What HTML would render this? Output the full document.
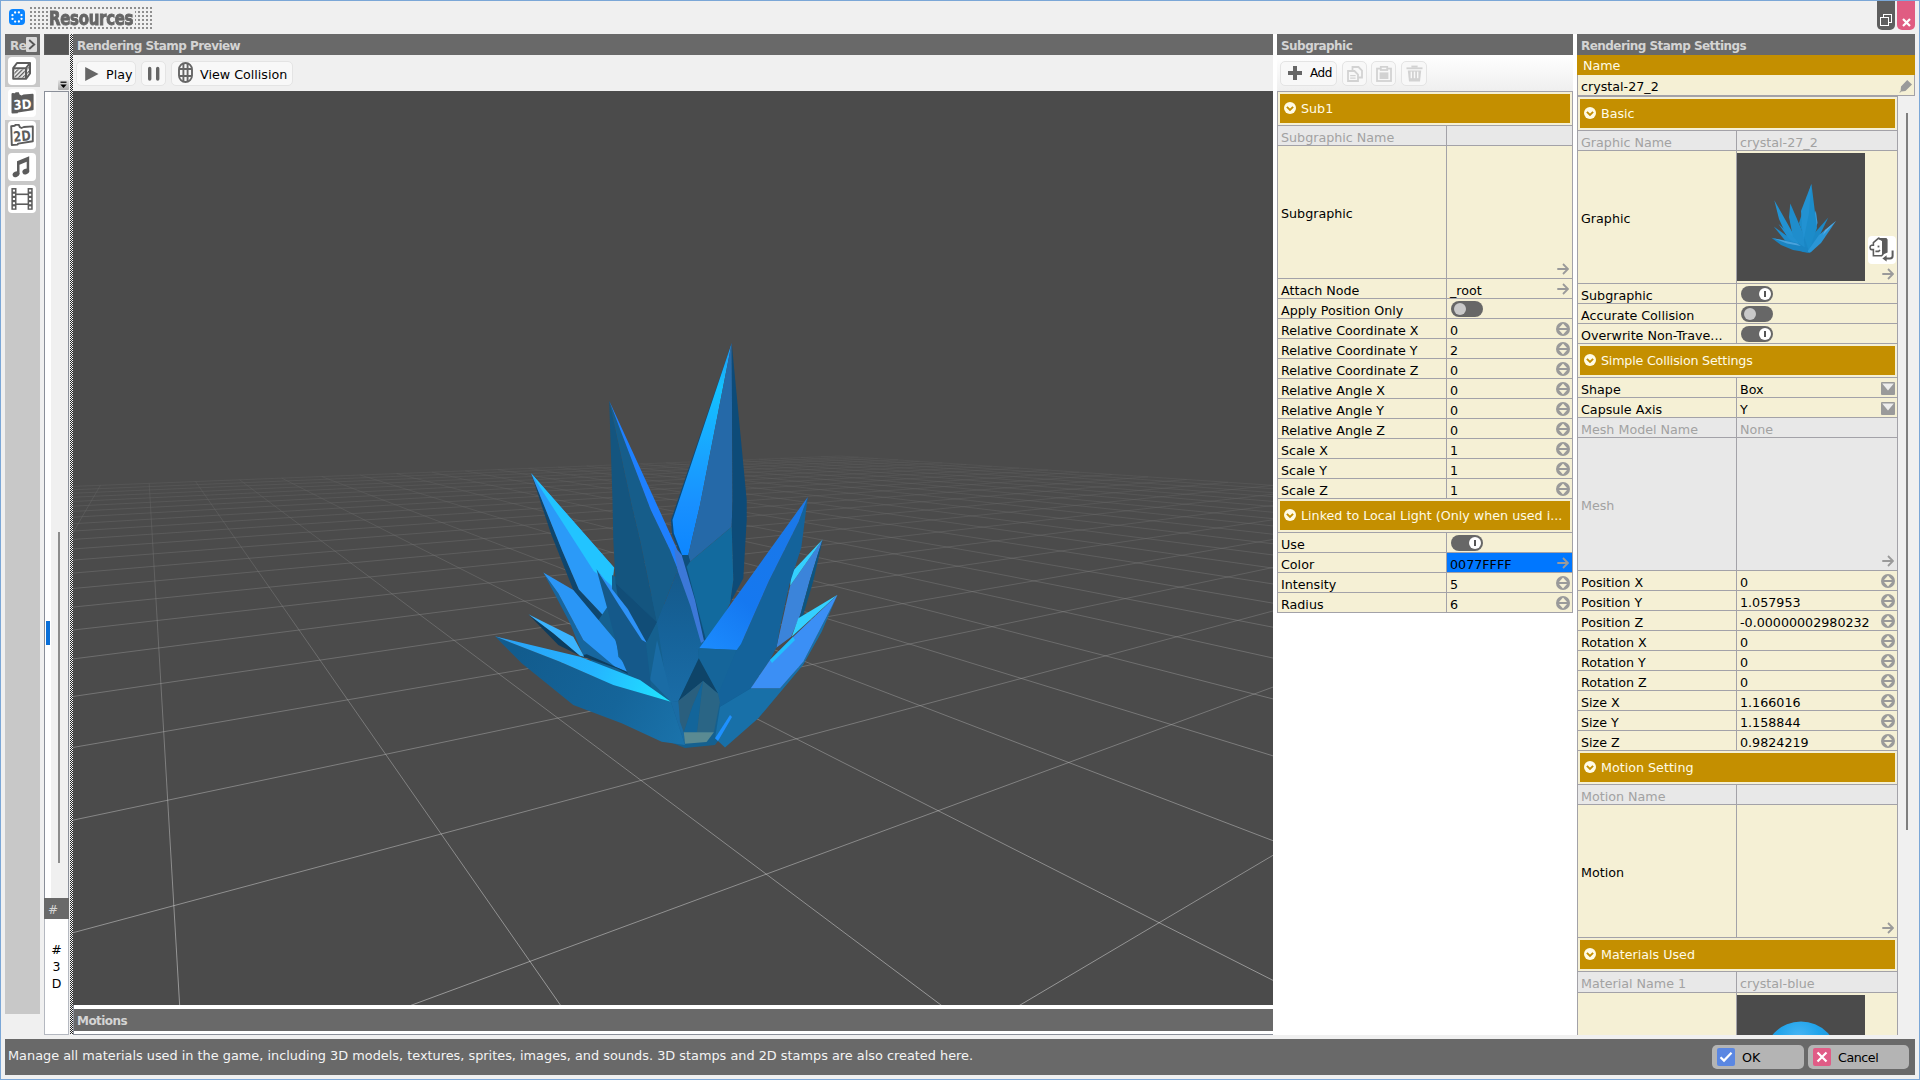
<!DOCTYPE html>
<html lang="en"><head><meta charset="utf-8"><title>Resources</title>
<style>
*{box-sizing:border-box}
html,body{margin:0;padding:0}
body{width:1920px;height:1080px;overflow:hidden;background:#f0f0f0;position:relative;font-family:"DejaVu Sans","Liberation Sans",sans-serif;font-size:12.7px;color:#000;line-height:19px}
.a{position:absolute}
.hdr{position:absolute;background:#696969;color:#d4d4d4;font-weight:bold;font-size:12px;line-height:21px;height:21px;padding-left:4px;white-space:nowrap;overflow:hidden}
.hdr span{position:relative;top:2px;letter-spacing:-0.55px}
.btn{position:absolute;background:#f8f8f8;border:1px solid #e4e4e4;border-radius:5px;height:25px}
.btn .t{position:absolute;top:3px;white-space:nowrap;line-height:19px}
.grid{position:absolute;background:#f5f0d5;border:1px solid #a3a2a8;overflow:hidden}
.r{position:absolute;left:0;right:0;border-top:1px solid #a3a2a8}
.r .l,.r .v{position:absolute;top:0;bottom:0;white-space:nowrap;overflow:hidden;padding-left:3px}
.r .l span,.r .v span{position:relative;top:2px}
.r .v{border-left:1px solid #a3a2a8}
.r.d{background:#e8e8e8;color:#a2a2a2}
.sec{position:absolute;left:2px;right:2px;height:29px;background:#c48f00;color:#fffbe6;white-space:nowrap;overflow:hidden}
.sec span{position:absolute;left:21px;top:5px;line-height:19px}
.sec svg{position:absolute;left:4px;top:8px}
.ic{position:absolute}
.tg{position:absolute;width:32px;height:16px;border-radius:8px;background:#676767}
.tg i{position:absolute;top:2px;width:12px;height:12px;border-radius:6px;display:block}
.tg.off i{left:3px;background:#c9c9c9}
.tg.on i{left:18px;background:#fff}
.tg.on i:after{content:"";position:absolute;left:5px;top:3px;width:2px;height:6px;background:#555}
.sb{position:absolute;left:8px;width:28px;height:28px;background:#fff;border-radius:4px}
</style></head>
<body>
<div class="a" style="left:0;top:0;width:1920px;height:1080px;border:1px solid #7ba7d7"></div>
<svg class="a" style="left:9px;top:9px" width="16" height="16" viewBox="0 0 16 16"><rect width="16" height="16" rx="4" fill="#0a84ff"/><circle cx="12.53" cy="9.86" r="1.15" fill="#fff"/><circle cx="9.89" cy="12.52" r="1.15" fill="#fff"/><circle cx="6.14" cy="12.53" r="1.15" fill="#fff"/><circle cx="3.48" cy="9.89" r="1.15" fill="#fff"/><circle cx="3.47" cy="6.14" r="1.15" fill="#fff"/><circle cx="6.11" cy="3.48" r="1.15" fill="#fff"/><circle cx="9.86" cy="3.47" r="1.15" fill="#fff"/><circle cx="12.52" cy="6.11" r="1.15" fill="#fff"/></svg>
<div class="a" style="left:30px;top:7px;width:122px;height:22px;background:linear-gradient(90deg,#f0f0f0 2px,transparent 2px),linear-gradient(#f0f0f0 2px,transparent 2px),#8e8e8e;background-size:4px 4px;background-position:-2px -2px"></div>
<div class="a" style="left:48px;top:10px;width:87px;height:17px;background:#f0f0f0"></div>
<div class="a" id="title" style="left:49px;top:5px;height:26px;line-height:26px;font-family:'DejaVu Sans Condensed','DejaVu Sans','Liberation Sans',sans-serif;font-weight:bold;font-size:19px;color:#666;transform-origin:0 50%;transform:scaleX(0.873);white-space:nowrap;letter-spacing:-0.3px;-webkit-text-stroke:0.9px #666;text-shadow:0 0 2px #f0f0f0">Resources</div>
<div class="a" style="left:1877px;top:1px;width:18px;height:29px;background:#5e5e5e;border-radius:0 0 5px 5px"><svg class="a" style="left:3px;top:13px" width="13" height="13" viewBox="0 0 13 13" fill="none" stroke="#fff" stroke-width="1"><rect x="3.5" y="0.5" width="8" height="8"/><rect x="0.5" y="3.5" width="8" height="8" fill="#5e5e5e"/></svg></div>
<div class="a" style="left:1897px;top:1px;width:18px;height:29px;background:#e05c82;border-radius:0 0 5px 5px"><svg class="a" style="left:5px;top:17px" width="9" height="9" viewBox="0 0 9 9" stroke="#fff" stroke-width="2.2"><path d="M1 1 L8 8 M8 1 L1 8"/></svg></div>
<div class="hdr" style="left:5px;top:34px;width:35px;padding-left:5px"><span>Re</span></div>
<div class="a" style="left:26px;top:37px;width:11px;height:15px;background:#d9d9d9;border-radius:1px"><svg class="a" style="left:2px;top:2px" width="8" height="11" viewBox="0 0 8 11" fill="none" stroke="#555" stroke-width="1.9"><path d="M1.2 1 L6.2 5.5 L1.2 10"/></svg></div>
<div class="a" style="left:5px;top:55px;width:35px;height:959px;background:#c8c8c8"></div>
<div class="a" style="left:5px;top:87px;width:35px;height:33px;background:#f0f0f0"></div>
<div class="sb" style="top:57px"><svg class="ic" style="left:4px;top:5px" width="20" height="18" viewBox="0 0 20 18"><defs><pattern id="hat" width="3" height="3" patternUnits="userSpaceOnUse" patternTransform="rotate(-45)"><rect width="3" height="1.4" fill="#5c5c5c"/></pattern></defs><path d="M1.2 6.2 L5 1 H18 V11.5 L14 16.8 H1.2 Z" fill="#fff" stroke="#5c5c5c" stroke-width="2" stroke-linejoin="round"/><path d="M1.2 6.2 H14 L18 1 M14 6.2 V16.8" fill="none" stroke="#5c5c5c" stroke-width="2" stroke-linejoin="round"/><rect x="2.4" y="7.4" width="10.4" height="8.2" fill="url(#hat)"/><path d="M15.2 6.8 L17 4.4 V11 L15.2 13.4 Z" fill="url(#hat)"/></svg></div>
<div class="sb" style="top:89px"><svg class="ic" style="left:2px;top:3px" width="24" height="22" viewBox="0 0 24 22"><path d="M1.5 2.2 Q1.5 1 2.7 1 L5 1.3 L5.6 0.3 H8.8 L9.6 2.6 L11.5 3.4 L13.5 2.4 L22.6 1.8 Q23.6 1.8 23.6 2.9 V17.2 Q23.6 18 22.8 18.2 L8 20.4 L7.6 21.2 L2.5 21.6 Q1.5 21.6 1.5 20.6 Z" fill="#5c5c5c"/><text x="3.4" y="17.2" font-family="DejaVu Sans,Liberation Sans,sans-serif" font-weight="bold" font-size="13" fill="#fff" transform="rotate(-4 12 12)" textLength="18" lengthAdjust="spacingAndGlyphs">3D</text></svg></div>
<div class="sb" style="top:121px"><svg class="ic" style="left:2px;top:3px" width="24" height="22" viewBox="0 0 24 22"><path d="M1.2 2.2 L4.8 1.8 L5.4 0.9 H8.8 L9.8 3.2 L11.5 4 L13.8 3 L22.8 2.4 V17.2 L8.2 19.6 L7.6 20.6 L1.8 21 Z" fill="#fff" stroke="#5c5c5c" stroke-width="1.9" stroke-linejoin="round"/><text x="3.4" y="17" font-family="DejaVu Sans,Liberation Sans,sans-serif" font-weight="bold" font-size="14" fill="#5c5c5c" transform="rotate(-5 12 12)" textLength="17.4" lengthAdjust="spacingAndGlyphs">2D</text></svg></div>
<div class="sb" style="top:153px"><svg class="ic" style="left:4px;top:3px" width="20" height="22" viewBox="0 0 20 22" fill="#5c5c5c"><path d="M5 5.2 L17.2 0.3 V15.4 H14.7 V5.7 L7.5 8.7 V18.2 H5 Z"/><ellipse cx="4" cy="18.3" rx="3.5" ry="2.7" transform="rotate(-25 4 18.3)"/><ellipse cx="13.8" cy="15.5" rx="3.5" ry="2.7" transform="rotate(-25 13.8 15.5)"/></svg></div>
<div class="sb" style="top:185px"><svg class="ic" style="left:3px;top:3px" width="22" height="22" viewBox="0 0 22 22" fill="#5c5c5c"><rect x="0.4" y="0" width="5.1" height="21.8"/><rect x="16.6" y="0" width="5.1" height="21.8"/><rect x="5" y="5.5" width="12" height="1.6"/><rect x="5" y="15.4" width="12" height="1.6"/><rect x="1.9" y="1.6" width="2.1" height="2" fill="#fff"/><rect x="18.1" y="1.6" width="2.1" height="2" fill="#fff"/><rect x="1.9" y="5.8" width="2.1" height="2" fill="#fff"/><rect x="18.1" y="5.8" width="2.1" height="2" fill="#fff"/><rect x="1.9" y="10" width="2.1" height="2" fill="#fff"/><rect x="18.1" y="10" width="2.1" height="2" fill="#fff"/><rect x="1.9" y="14.2" width="2.1" height="2" fill="#fff"/><rect x="18.1" y="14.2" width="2.1" height="2" fill="#fff"/><rect x="1.9" y="18.4" width="2.1" height="2" fill="#fff"/><rect x="18.1" y="18.4" width="2.1" height="2" fill="#fff"/></svg></div>
<div class="a" style="left:44px;top:34px;width:25px;height:21px;background:#545454;border:1px solid #5e5e5e"></div>
<div class="a" style="left:58px;top:80px;width:11px;height:10px;background:linear-gradient(#e4e4e4,#a8a8a8);border-radius:1px"><svg class="a" style="left:2px;top:1px" width="7" height="8" viewBox="0 0 7 8"><rect x="0.5" y="0.6" width="6" height="1.2" fill="#000"/><path d="M0.3 3.4 H6.7 L3.5 7 Z" fill="#000"/></svg></div>
<div class="a" style="left:44px;top:91px;width:25px;height:807px;background:#f0f0f0;border:1px solid #8a8f99;border-bottom:none"></div>
<div class="a" style="left:45px;top:92px;width:6px;height:806px;background:#fff"></div>
<div class="a" style="left:46px;top:621px;width:4px;height:24px;background:#0a6fd8"></div>
<div class="a" style="left:58px;top:532px;width:2px;height:331px;background:#8c8c8c"></div>
<div class="hdr" style="left:44px;top:898px;width:25px;font-weight:normal;color:#d6d6d6"><span>#</span></div>
<div class="a" style="left:44px;top:919px;width:25px;height:116px;background:#fff;border:1px solid #b4b8c0;border-top:none"></div>
<div class="a" style="left:44px;top:941px;width:25px;text-align:center;line-height:17px;font-size:12.5px">#<br>3<br>D</div>
<div class="a" style="left:70px;top:34px;width:3px;height:1000px;background:repeating-conic-gradient(#222 0 25%,#f4f4f4 0 50%);background-size:2px 2px"></div>
<div class="a" style="left:73px;top:34px;width:1504px;height:1001px;background:#fff"></div>
<div class="a" style="left:73px;top:55px;width:1200px;height:36px;background:#f0f0f0"></div>
<div class="hdr" style="left:73px;top:34px;width:1200px"><span>Rendering Stamp Preview</span></div>
<div class="btn" style="left:76px;top:61px;width:60px"><svg class="a" style="left:7px;top:4px" width="16" height="16" viewBox="0 0 16 16"><path d="M1.2 1 L14.5 8 L1.2 15 Z" fill="#666"/></svg><span class="t" style="left:29px">Play</span></div>
<div class="btn" style="left:141px;top:61px;width:25px"><svg class="a" style="left:5px;top:4px" width="14" height="16" viewBox="0 0 14 16" stroke="#666" stroke-width="3.4" stroke-linecap="round"><path d="M2.7 2.5 V13 M10.7 2.5 V13"/></svg></div>
<div class="btn" style="left:171px;top:61px;width:122px"><svg class="a" style="left:6px;top:0px" width="15" height="21" viewBox="0 0 15 21" fill="none" stroke="#666" stroke-width="1.9"><rect x="1" y="1" width="13" height="19" rx="6.5"/><path d="M5.4 1.4 V19.6 M9.6 1.4 V19.6 M1 7 H14 M1 14 H14"/></svg><span class="t" style="left:28px">View Collision</span></div>
<svg class="a" style="left:73px;top:91px" width="1200" height="914" viewBox="73 91 1200 914">
<defs><linearGradient id="fg" gradientUnits="userSpaceOnUse" x1="0" y1="452" x2="0" y2="1005"><stop offset="0.0000" stop-color="#fff" stop-opacity="0.07"/><stop offset="0.0506" stop-color="#fff" stop-opacity="0.12"/><stop offset="0.1230" stop-color="#fff" stop-opacity="0.18"/><stop offset="0.2134" stop-color="#fff" stop-opacity="0.27"/><stop offset="0.3400" stop-color="#fff" stop-opacity="0.41"/><stop offset="0.5208" stop-color="#fff" stop-opacity="0.62"/><stop offset="0.7378" stop-color="#fff" stop-opacity="0.84"/><stop offset="1.0000" stop-color="#fff" stop-opacity="1.00"/></linearGradient><mask id="fade" maskUnits="userSpaceOnUse" x="73" y="91" width="1200" height="914"><rect x="73" y="91" width="1200" height="914" fill="url(#fg)"/></mask></defs>
<rect x="73" y="91" width="1200" height="914" fill="#4b4b4b"/>
<g mask="url(#fade)"><path d="M100.4 485.3L60.0 555.0M149.2 483.4L180.5 1020.0M195.6 481.6L570.8 1020.0M239.7 479.8L961.0 1020.0M281.8 478.1L1290.0 989.0M321.9 476.6L1290.0 847.2M360.2 475.0L1290.0 761.1M396.8 473.6L1290.0 703.3M431.9 472.2L1290.0 661.8M465.5 470.9L1290.0 630.5M497.7 469.6L1290.0 606.1M528.6 468.4L1290.0 586.6M558.2 467.2L1290.0 570.5M586.8 466.0L1290.0 557.2M614.2 465.0L1290.0 545.8M640.6 463.9L1290.0 536.1M666.0 462.9L1290.0 527.7M690.6 461.9L1290.0 520.3M714.2 461.0L1290.0 513.8M737.0 460.1L1290.0 508.0M759.1 459.2L1290.0 502.8M780.4 458.4L1290.0 498.1M801.0 457.5L1290.0 493.9M820.9 456.7L1290.0 490.0M840.2 456.0L1290.0 486.5M60.0 486.9L840.2 456.0M60.0 490.3L858.5 457.2M60.0 493.8L877.7 458.5M60.0 497.8L898.0 459.9M60.0 502.1L919.5 461.4M60.0 506.8L942.2 462.9M60.0 512.1L966.3 464.5M60.0 517.9L991.8 466.3M60.0 524.5L1019.1 468.1M60.0 531.9L1048.1 470.1M60.0 540.3L1079.1 472.2M60.0 549.9L1112.4 474.5M60.0 561.1L1148.1 476.9M60.0 574.2L1186.5 479.5M60.0 589.7L1228.0 482.3M60.0 608.4L1272.9 485.4M60.0 631.5L1290.0 492.3M60.0 660.6L1290.0 503.2M60.0 698.4L1290.0 517.3M60.0 749.7L1290.0 536.5M60.0 822.9L1290.0 563.9M60.0 936.2L1290.0 606.4M371.2 1020.0L1290.0 680.8M994.8 1020.0L1290.0 845.2" fill="none" stroke="#fff" stroke-opacity="0.46" stroke-width="0.95"/></g>
<defs><linearGradient id="c0" gradientUnits="userSpaceOnUse" x1="0" y1="343" x2="0" y2="567"><stop offset="0" stop-color="#2094f2"/><stop offset="0.2" stop-color="#14c2ff"/><stop offset="0.48" stop-color="#18a6ff"/><stop offset="0.72" stop-color="#1890ff"/><stop offset="1" stop-color="#0a84ff"/></linearGradient><linearGradient id="c5" gradientUnits="userSpaceOnUse" x1="495" y1="636" x2="671" y2="702"><stop offset="0" stop-color="#2aa0f5"/><stop offset="0.55" stop-color="#25b4ff"/><stop offset="1" stop-color="#1fe6ff"/></linearGradient><linearGradient id="c7" gradientUnits="userSpaceOnUse" x1="700" y1="650" x2="800" y2="520"><stop offset="0" stop-color="#1b8cff"/><stop offset="0.4" stop-color="#1578f0"/><stop offset="1" stop-color="#1a78e8"/></linearGradient><linearGradient id="c5b" gradientUnits="userSpaceOnUse" x1="520" y1="650" x2="680" y2="740"><stop offset="0" stop-color="#125c8e"/><stop offset="0.6" stop-color="#15659a"/><stop offset="1" stop-color="#1a72aa"/></linearGradient><linearGradient id="cC" gradientUnits="userSpaceOnUse" x1="0" y1="570" x2="0" y2="700"><stop offset="0" stop-color="#15598a"/><stop offset="0.5" stop-color="#16639a"/><stop offset="1" stop-color="#1a6ca6"/></linearGradient></defs><g><polygon fill="#0a4a7a" points="731.7,343.0 671.0,520.0 672.0,534.0 686.0,568.0 690.0,560.0 680.0,520.0"/><polygon fill="url(#c0)" points="731.7,343.0 672.5,520.0 673.8,533.3 686.7,566.7 688.3,555.0 700.0,505.0"/><polygon fill="#2569a8" points="731.7,343.0 700.0,505.0 688.3,555.0 690.0,561.7 731.7,526.7 732.5,500.0"/><polygon fill="#0d4b78" points="731.7,343.0 732.5,500.0 731.7,526.7 733.3,580.0 730.0,603.3 743.3,578.3 746.7,520.0 746.7,500.0"/><polygon fill="#0e4e7c" points="681.7,555.0 688.3,555.0 710.0,640.0 703.5,640.0"/><polygon fill="#126a9e" points="690.0,561.7 731.7,526.7 733.3,580.0 730.0,603.3 712.0,640.0 706.0,640.0 686.7,566.7"/><polygon fill="#0e466e" points="531.1,473.3 562.2,550.7 578.9,589.6 610.4,623.0 616.7,641.7 600.0,625.0 573.3,590.0 551.1,534.1"/><polygon fill="#2b9af8" points="531.1,473.3 614.0,567.4 612.2,582.2 610.4,623.0 578.9,589.6 562.2,550.7"/><polygon fill="#22c4ff" points="531.1,473.3 614.0,567.4 612.2,586.0 593.7,571.1"/><polygon fill="#3b84da" points="822.6,539.4 790.2,585.7 776.3,647.8 791.1,636.7 800.4,614.4 809.6,581.1 817.0,557.0"/><polygon fill="#34d0ff" points="822.6,539.4 791.1,572.8 790.2,585.7"/><polygon fill="#0d5580" points="822.6,539.4 817.0,557.0 809.6,581.1 800.4,614.4 793.0,634.8 798.5,631.1 813.3,581.1 821.7,544.0"/><polygon fill="#15608f" points="612.0,575.0 660.0,600.0 700.0,640.0 760.0,640.0 750.0,700.0 715.0,745.0 685.0,748.0 640.0,730.0 600.0,690.0 585.0,640.0 612.0,600.0"/><polygon fill="#14557f" points="609.2,400.8 612.5,500.0 613.3,540.0 615.6,583.0 657.0,622.2 640.0,540.0 631.7,505.0"/><polygon fill="#165d8a" points="609.2,400.8 631.7,505.0 640.0,540.0 657.0,622.2 677.8,569.6 670.0,550.0 650.8,510.0"/><polygon fill="#1e80ff" points="609.2,400.8 650.8,510.0 670.0,550.0 677.8,569.6 681.7,555.0 677.4,550.0 659.3,510.0"/><polygon fill="#114d77" points="615.6,583.0 657.0,622.2 646.7,642.2 620.0,610.0"/><polygon fill="#15608f" points="646.7,642.2 657.0,622.2 668.9,700.0 651.0,700.0"/><polygon fill="url(#cC)" points="677.8,569.6 703.7,641.5 698.5,649.6 698.8,658.3 678.4,701.0 673.0,702.0 668.9,700.0 657.0,622.2"/><polygon fill="#3c78d8" points="674.0,548.0 681.7,555.0 695.0,600.0 704.0,641.0 701.0,643.0 690.4,606.0 677.8,571.0"/><polygon fill="#1a6ca5" points="657.0,640.0 673.0,702.0 678.4,701.0 683.8,732.3 685.0,745.0 670.8,701.7 650.0,680.0"/><polygon fill="#1870a8" points="837.5,594.7 831.7,606.7 803.3,661.7 780.0,688.3 750.8,688.3 720.0,706.7 715.0,738.3 725.0,747.5 758.3,718.3 803.0,665.0 821.7,631.7"/><polygon fill="#14639b" points="807.8,496.9 801.3,547.8 789.3,584.8 780.0,627.4 776.7,646.7 770.0,660.0 750.8,688.3 720.0,706.7 718.0,690.0 736.7,650.0 741.0,644.0 768.9,581.0 798.5,521.9"/><polygon fill="url(#c7)" points="807.8,496.9 699.2,648.3 736.7,650.0 741.0,644.0 768.9,581.0 798.5,521.9"/><polygon fill="#15659a" points="699.2,648.3 736.7,650.0 720.0,690.0 718.3,696.7 698.3,660.0"/><polygon fill="#34d0ff" points="837.5,594.7 798.3,618.3 791.7,636.7"/><polygon fill="#3b8ff5" points="837.5,594.7 791.7,638.3 770.0,660.0 750.8,688.3 780.0,688.3 803.3,661.7 831.7,606.7"/><polygon fill="#20c0ff" points="793.0,637.0 770.0,660.0 772.0,663.0 795.0,640.0"/><polygon fill="#1e90ff" points="715.0,738.3 730.0,715.0 732.0,717.0 718.0,741.0"/><polygon fill="#0e4468" points="698.8,658.3 718.1,693.8 703.0,681.1 678.4,701.0"/><polygon fill="#2a5f7e" points="678.4,701.0 703.0,681.1 692.2,707.0 683.8,732.3 680.0,722.0"/><polygon fill="#13659a" points="692.2,707.0 703.0,681.1 697.0,732.3 683.8,732.3"/><polygon fill="#2a6585" points="703.0,681.1 718.1,693.8 719.9,702.2 713.9,732.3 697.0,732.3"/><polygon fill="#5a8a92" points="683.8,732.3 713.9,732.3 706.6,741.9 685.0,743.7"/><polygon fill="#17669e" points="543.3,572.4 552.5,590.0 570.0,623.3 583.3,655.8 615.0,666.7 583.3,640.0 558.3,593.3"/><polygon fill="#2a96f6" points="543.3,572.4 573.3,590.0 616.7,641.7 618.3,656.7 635.0,675.0 615.0,666.7 583.3,640.0 558.3,593.3"/><polygon fill="#0e3d5e" points="580.0,655.8 586.7,654.2 615.8,667.0 635.0,675.3 640.0,680.0 616.7,668.3"/><polygon fill="#15598a" points="596.5,569.3 624.4,609.6 645.9,643.0 652.6,700.0 639.3,700.0 618.5,652.6 609.6,617.0"/><polygon fill="#2e92f8" points="596.5,569.3 627.8,609.0 646.5,642.4 641.9,640.0 619.6,606.0"/><polygon fill="#0b3c5e" points="528.3,614.2 553.3,633.3 580.0,655.8 558.3,645.0"/><polygon fill="#3bb4ff" points="528.3,614.2 573.3,636.7 584.2,656.7 580.0,655.8 553.3,633.3"/><polygon fill="url(#c5b)" points="495.0,636.3 560.0,661.7 613.3,685.0 670.8,701.7 685.0,745.0 661.7,741.7 621.7,723.3 573.3,705.0 521.7,663.3"/><polygon fill="url(#c5)" points="495.0,636.3 580.0,656.7 640.0,680.0 670.8,701.7 613.3,685.0 560.0,661.7"/></g>
</svg>
<div class="a" style="left:73px;top:1005px;width:1200px;height:30px;background:#fff;border-left:1px solid #8a8f99;border-bottom:1px solid #8a8f99"></div>
<div class="hdr" style="left:74px;top:1009px;width:1199px;height:22px;padding-left:3px"><span>Motions</span></div>
<div class="hdr" style="left:1277px;top:34px;width:296px"><span>Subgraphic</span></div>
<div class="a" style="left:1277px;top:55px;width:296px;height:36px;background:linear-gradient(#fff,#efefef)"></div>
<div class="btn" style="left:1280px;top:61px;width:57px"><svg class="a" style="left:7px;top:4px" width="14" height="14" viewBox="0 0 14 14"><path d="M5 0 H9 V5 H14 V9 H9 V14 H5 V9 H0 V5 H5 Z" fill="#666"/></svg><span class="t" style="left:29px;top:2px;font-size:12px;letter-spacing:-0.4px">Add</span></div>
<div class="btn" style="left:1342px;top:61px;width:25px"><svg class="a" style="left:4px;top:4px" width="16" height="16" viewBox="0 0 16 16" fill="none" stroke="#d2d2d2" stroke-width="1.8"><path d="M5.5 4.5 V1 H11.5 L15 4.5 V11.5 H11"/><path d="M1 5 H7.5 L11 8.5 V15 H1 Z" fill="#f8f8f8"/><path d="M3.2 9.6 H8.6 M3.2 12.2 H8.6" stroke-width="1.2"/></svg></div>
<div class="btn" style="left:1371px;top:61px;width:25px"><svg class="a" style="left:4px;top:4px" width="16" height="16" viewBox="0 0 16 16" fill="none" stroke="#d2d2d2" stroke-width="1.8"><rect x="1" y="2.6" width="14" height="12.4"/><rect x="3.6" y="6.4" width="8.8" height="6.6" fill="#d2d2d2" stroke="none"/><rect x="4.8" y="0.8" width="6.4" height="3.2" fill="#f8f8f8"/></svg></div>
<div class="btn" style="left:1401px;top:61px;width:26px"><svg class="a" style="left:4px;top:3px" width="17" height="17" viewBox="0 0 17 17" fill="#d2d2d2"><rect x="0.5" y="2.4" width="16" height="1.8"/><rect x="5.4" y="0.6" width="6.2" height="2"/><path d="M1.8 5.4 H15.2 L14 16.4 H3 Z"/><rect x="4.6" y="6.6" width="1.4" height="6.6" fill="#f8f8f8"/><rect x="7.8" y="6.6" width="1.4" height="6.6" fill="#f8f8f8"/><rect x="11" y="6.6" width="1.4" height="6.6" fill="#f8f8f8"/></svg></div>
<div class="grid" style="left:1277px;top:91px;width:296px;height:522px">
<div class="sec" style="top:2px"><svg width="12" height="12" viewBox="0 0 12 12"><circle cx="6" cy="6" r="6" fill="#fffbe6"/><path d="M2.9 4.9 L6 8 L9.1 4.9" fill="none" stroke="#c48f00" stroke-width="1.9"/></svg><span>Sub1</span></div>
<div class="r d" style="top:33px;height:20px">
<div class="l" style="left:0;width:168px;padding-top:0px"><span>Subgraphic Name</span></div>
<div class="v" style="left:168px;right:0;">

</div></div>
<div class="r" style="top:53px;height:133px">
<div class="l" style="left:0;width:168px;padding-top:56px"><span>Subgraphic</span></div>
<div class="v" style="left:168px;right:0;">
<svg class="ic" style="left:110px;top:117px" width="12" height="12" viewBox="0 0 12 12" fill="none" stroke="#9a9a9a" stroke-width="1.8"><path d="M0.3 6 H11 M6 1 L11 6 L6 11"/></svg>
</div></div>
<div class="r" style="top:186px;height:20px">
<div class="l" style="left:0;width:168px;padding-top:0px"><span>Attach Node</span></div>
<div class="v" style="left:168px;right:0;">
<span>_root</span>
<svg class="ic" style="left:110px;top:4px" width="12" height="12" viewBox="0 0 12 12" fill="none" stroke="#9a9a9a" stroke-width="1.8"><path d="M0.3 6 H11 M6 1 L11 6 L6 11"/></svg>
</div></div>
<div class="r" style="top:206px;height:20px">
<div class="l" style="left:0;width:168px;padding-top:0px"><span>Apply Position Only</span></div>
<div class="v" style="left:168px;right:0;">
<div class="tg off" style="left:4px;top:2px"><i></i></div>
</div></div>
<div class="r" style="top:226px;height:20px">
<div class="l" style="left:0;width:168px;padding-top:0px"><span>Relative Coordinate X</span></div>
<div class="v" style="left:168px;right:0;">
<span>0</span>
<svg class="ic" style="left:109px;top:3px" width="14" height="14" viewBox="0 0 14 14"><circle cx="7" cy="7" r="7" fill="#9a9a9a"/><path d="M7 1.6 L11 5.9 H3 Z M7 12.4 L11 8.1 H3 Z" fill="#f5f0d5"/></svg>
</div></div>
<div class="r" style="top:246px;height:20px">
<div class="l" style="left:0;width:168px;padding-top:0px"><span>Relative Coordinate Y</span></div>
<div class="v" style="left:168px;right:0;">
<span>2</span>
<svg class="ic" style="left:109px;top:3px" width="14" height="14" viewBox="0 0 14 14"><circle cx="7" cy="7" r="7" fill="#9a9a9a"/><path d="M7 1.6 L11 5.9 H3 Z M7 12.4 L11 8.1 H3 Z" fill="#f5f0d5"/></svg>
</div></div>
<div class="r" style="top:266px;height:20px">
<div class="l" style="left:0;width:168px;padding-top:0px"><span>Relative Coordinate Z</span></div>
<div class="v" style="left:168px;right:0;">
<span>0</span>
<svg class="ic" style="left:109px;top:3px" width="14" height="14" viewBox="0 0 14 14"><circle cx="7" cy="7" r="7" fill="#9a9a9a"/><path d="M7 1.6 L11 5.9 H3 Z M7 12.4 L11 8.1 H3 Z" fill="#f5f0d5"/></svg>
</div></div>
<div class="r" style="top:286px;height:20px">
<div class="l" style="left:0;width:168px;padding-top:0px"><span>Relative Angle X</span></div>
<div class="v" style="left:168px;right:0;">
<span>0</span>
<svg class="ic" style="left:109px;top:3px" width="14" height="14" viewBox="0 0 14 14"><circle cx="7" cy="7" r="7" fill="#9a9a9a"/><path d="M7 1.6 L11 5.9 H3 Z M7 12.4 L11 8.1 H3 Z" fill="#f5f0d5"/></svg>
</div></div>
<div class="r" style="top:306px;height:20px">
<div class="l" style="left:0;width:168px;padding-top:0px"><span>Relative Angle Y</span></div>
<div class="v" style="left:168px;right:0;">
<span>0</span>
<svg class="ic" style="left:109px;top:3px" width="14" height="14" viewBox="0 0 14 14"><circle cx="7" cy="7" r="7" fill="#9a9a9a"/><path d="M7 1.6 L11 5.9 H3 Z M7 12.4 L11 8.1 H3 Z" fill="#f5f0d5"/></svg>
</div></div>
<div class="r" style="top:326px;height:20px">
<div class="l" style="left:0;width:168px;padding-top:0px"><span>Relative Angle Z</span></div>
<div class="v" style="left:168px;right:0;">
<span>0</span>
<svg class="ic" style="left:109px;top:3px" width="14" height="14" viewBox="0 0 14 14"><circle cx="7" cy="7" r="7" fill="#9a9a9a"/><path d="M7 1.6 L11 5.9 H3 Z M7 12.4 L11 8.1 H3 Z" fill="#f5f0d5"/></svg>
</div></div>
<div class="r" style="top:346px;height:20px">
<div class="l" style="left:0;width:168px;padding-top:0px"><span>Scale X</span></div>
<div class="v" style="left:168px;right:0;">
<span>1</span>
<svg class="ic" style="left:109px;top:3px" width="14" height="14" viewBox="0 0 14 14"><circle cx="7" cy="7" r="7" fill="#9a9a9a"/><path d="M7 1.6 L11 5.9 H3 Z M7 12.4 L11 8.1 H3 Z" fill="#f5f0d5"/></svg>
</div></div>
<div class="r" style="top:366px;height:20px">
<div class="l" style="left:0;width:168px;padding-top:0px"><span>Scale Y</span></div>
<div class="v" style="left:168px;right:0;">
<span>1</span>
<svg class="ic" style="left:109px;top:3px" width="14" height="14" viewBox="0 0 14 14"><circle cx="7" cy="7" r="7" fill="#9a9a9a"/><path d="M7 1.6 L11 5.9 H3 Z M7 12.4 L11 8.1 H3 Z" fill="#f5f0d5"/></svg>
</div></div>
<div class="r" style="top:386px;height:20px">
<div class="l" style="left:0;width:168px;padding-top:0px"><span>Scale Z</span></div>
<div class="v" style="left:168px;right:0;">
<span>1</span>
<svg class="ic" style="left:109px;top:3px" width="14" height="14" viewBox="0 0 14 14"><circle cx="7" cy="7" r="7" fill="#9a9a9a"/><path d="M7 1.6 L11 5.9 H3 Z M7 12.4 L11 8.1 H3 Z" fill="#f5f0d5"/></svg>
</div></div>
<div class="r" style="top:406px;height:1px"></div>
<div class="sec" style="top:409px"><svg width="12" height="12" viewBox="0 0 12 12"><circle cx="6" cy="6" r="6" fill="#fffbe6"/><path d="M2.9 4.9 L6 8 L9.1 4.9" fill="none" stroke="#c48f00" stroke-width="1.9"/></svg><span>Linked to Local Light (Only when used i...</span></div>
<div class="r" style="top:440px;height:20px">
<div class="l" style="left:0;width:168px;padding-top:0px"><span>Use</span></div>
<div class="v" style="left:168px;right:0;">
<div class="tg on" style="left:4px;top:2px"><i></i></div>
</div></div>
<div class="r" style="top:460px;height:20px">
<div class="l" style="left:0;width:168px;padding-top:0px"><span>Color</span></div>
<div class="v" style="left:168px;right:0;background:#0077ff;">
<span>0077FFFF</span>
<svg class="ic" style="left:110px;top:4px" width="12" height="12" viewBox="0 0 12 12" fill="none" stroke="#9a9a9a" stroke-width="1.8"><path d="M0.3 6 H11 M6 1 L11 6 L6 11"/></svg>
</div></div>
<div class="r" style="top:480px;height:20px">
<div class="l" style="left:0;width:168px;padding-top:0px"><span>Intensity</span></div>
<div class="v" style="left:168px;right:0;">
<span>5</span>
<svg class="ic" style="left:109px;top:3px" width="14" height="14" viewBox="0 0 14 14"><circle cx="7" cy="7" r="7" fill="#9a9a9a"/><path d="M7 1.6 L11 5.9 H3 Z M7 12.4 L11 8.1 H3 Z" fill="#f5f0d5"/></svg>
</div></div>
<div class="r" style="top:500px;height:20px">
<div class="l" style="left:0;width:168px;padding-top:0px"><span>Radius</span></div>
<div class="v" style="left:168px;right:0;">
<span>6</span>
<svg class="ic" style="left:109px;top:3px" width="14" height="14" viewBox="0 0 14 14"><circle cx="7" cy="7" r="7" fill="#9a9a9a"/><path d="M7 1.6 L11 5.9 H3 Z M7 12.4 L11 8.1 H3 Z" fill="#f5f0d5"/></svg>
</div></div>
<div class="r" style="top:520px;height:1px"></div>
</div>
<div class="hdr" style="left:1577px;top:34px;width:338px"><span>Rendering Stamp Settings</span></div>
<div class="a" style="left:1577px;top:55px;width:338px;height:20px;background:#c48f00;color:#fffbe6;padding-left:6px;line-height:19px"><span style="position:relative;top:1px">Name</span></div>
<div class="a" style="left:1577px;top:75px;width:338px;height:21px;background:#f5f0d5;border:1px solid #a3a2a8;border-top:none;padding-left:3px;line-height:19px"><span style="position:relative;top:2px">crystal-27_2</span><svg class="a" style="left:321px;top:4px" width="14" height="14" viewBox="0 0 14 14" fill="#9a9a9a"><path d="M8.2 1 L13 5.6 L6.4 12 L2.2 12.6 L1 13.8 L0.4 13.2 L1.6 12 L2 7.6 Z"/></svg></div>
<div class="grid" style="border-bottom:none;left:1577px;top:96px;width:321px;height:939px">
<div class="sec" style="top:2px"><svg width="12" height="12" viewBox="0 0 12 12"><circle cx="6" cy="6" r="6" fill="#fffbe6"/><path d="M2.9 4.9 L6 8 L9.1 4.9" fill="none" stroke="#c48f00" stroke-width="1.9"/></svg><span>Basic</span></div>
<div class="r d" style="top:33px;height:20px">
<div class="l" style="left:0;width:158px;padding-top:0px"><span>Graphic Name</span></div>
<div class="v" style="left:158px;right:0;">
<span>crystal-27_2</span>

</div></div>
<div class="r" style="top:53px;height:133px">
<div class="l" style="left:0;width:158px;padding-top:56px"><span>Graphic</span></div>
<div class="v" style="left:158px;right:0;">
<svg class="ic" style="left:0;top:2px" width="128" height="128" viewBox="0 0 128 128"><rect width="128" height="128" fill="#4b4b4b"/><polygon fill="#1a86c4" points="52,80 82,80 80,92 73,100 66,99 56,94"/><polygon fill="#1b88c6" points="91.3,64.6 78,92 70,99 74,84"/><polygon fill="#3a9ede" points="78.8,57.5 80.5,70 77,80 76,68"/><polygon fill="#1c8cca" points="74.4,31 80,75 72,98 62,70"/><polygon fill="#2292d2" points="74.4,31 64,58 66,90 72,60"/><polygon fill="#2292d2" points="37.3,47.2 58,84 66,98 52,88 42,66"/><polygon fill="#1f8dcc" points="53.3,50.4 66,80 68,96 56,84 52,64"/><polygon fill="#1e8ccc" points="36.7,73.5 54,86 62,94 50,90"/><polygon fill="#2290d0" points="41.5,71 58,86 62,92 52,86"/><polygon fill="#2a96d6" points="99,68.1 84,90 74,99 70,99 82,82"/><polygon fill="#5aaae2" points="99,68.1 88,77 86,82"/><polygon fill="#1a84c2" points="34.4,84.7 60,90 71,96 71,99.6 56,97 44,92"/><polygon fill="#4aa2dc" points="36,85.2 60,90.5 64,93 50,90.5"/></svg><div class="ic" style="left:131px;top:85px;width:28px;height:28px;background:#fff;border-radius:4px"><svg class="a" style="left:1px;top:1px" width="26" height="26" viewBox="0 0 26 26" fill="none" stroke="#5c5c5c" stroke-width="1.6"><path d="M13.6 3.2 L9.6 1 H17.4 L18.6 2.4 V15.4 L14 17.6 Z" fill="#5c5c5c" stroke="none"/><path d="M9.6 1.2 L4.4 5.6 V8.2 H2.6 Q1 8.6 1 10.4 Q1 12.4 2.8 12.6 H4.4 V18.8 H12.6 L13.8 17.4 V3.4 Z" fill="#fff"/><path d="M9.6 1.2 L13.8 3.4" /><rect x="8.6" y="8.6" width="1.8" height="1.8" fill="#5c5c5c" stroke="none"/><path d="M6.4 14.4 H9.6 L11 13"/><path d="M23.6 13.4 V19 Q23.6 21.4 21 21.4 H16" stroke-width="2"/><path d="M17.6 18.2 L13.4 21.4 L17.6 24.6 Z" fill="#5c5c5c" stroke="none"/></svg></div><svg class="ic" style="left:145px;top:117px" width="12" height="12" viewBox="0 0 12 12" fill="none" stroke="#9a9a9a" stroke-width="1.8"><path d="M0.3 6 H11 M6 1 L11 6 L6 11"/></svg>
</div></div>
<div class="r" style="top:186px;height:20px">
<div class="l" style="left:0;width:158px;padding-top:0px"><span>Subgraphic</span></div>
<div class="v" style="left:158px;right:0;">
<div class="tg on" style="left:4px;top:2px"><i></i></div>
</div></div>
<div class="r" style="top:206px;height:20px">
<div class="l" style="left:0;width:158px;padding-top:0px"><span>Accurate Collision</span></div>
<div class="v" style="left:158px;right:0;">
<div class="tg off" style="left:4px;top:2px"><i></i></div>
</div></div>
<div class="r" style="top:226px;height:20px">
<div class="l" style="left:0;width:158px;padding-top:0px"><span>Overwrite Non-Trave...</span></div>
<div class="v" style="left:158px;right:0;">
<div class="tg on" style="left:4px;top:2px"><i></i></div>
</div></div>
<div class="r" style="top:246px;height:1px"></div>
<div class="sec" style="top:249px"><svg width="12" height="12" viewBox="0 0 12 12"><circle cx="6" cy="6" r="6" fill="#fffbe6"/><path d="M2.9 4.9 L6 8 L9.1 4.9" fill="none" stroke="#c48f00" stroke-width="1.9"/></svg><span style="letter-spacing:-0.2px">Simple Collision Settings</span></div>
<div class="r" style="top:280px;height:20px">
<div class="l" style="left:0;width:158px;padding-top:0px"><span>Shape</span></div>
<div class="v" style="left:158px;right:0;">
<span>Box</span>
<svg class="ic" style="left:144px;top:4px" width="14" height="13" viewBox="0 0 14 13"><rect width="14" height="13" rx="1" fill="#9a9a9a"/><path d="M1.2 1.5 H12.8 L7 8.5 Z" fill="#ededed"/></svg>
</div></div>
<div class="r" style="top:300px;height:20px">
<div class="l" style="left:0;width:158px;padding-top:0px"><span>Capsule Axis</span></div>
<div class="v" style="left:158px;right:0;">
<span>Y</span>
<svg class="ic" style="left:144px;top:4px" width="14" height="13" viewBox="0 0 14 13"><rect width="14" height="13" rx="1" fill="#9a9a9a"/><path d="M1.2 1.5 H12.8 L7 8.5 Z" fill="#ededed"/></svg>
</div></div>
<div class="r d" style="top:320px;height:20px">
<div class="l" style="left:0;width:158px;padding-top:0px"><span>Mesh Model Name</span></div>
<div class="v" style="left:158px;right:0;">
<span>None</span>

</div></div>
<div class="r d" style="top:340px;height:133px">
<div class="l" style="left:0;width:158px;padding-top:56px"><span>Mesh</span></div>
<div class="v" style="left:158px;right:0;">
<svg class="ic" style="left:145px;top:117px" width="12" height="12" viewBox="0 0 12 12" fill="none" stroke="#9a9a9a" stroke-width="1.8"><path d="M0.3 6 H11 M6 1 L11 6 L6 11"/></svg>
</div></div>
<div class="r" style="top:473px;height:20px">
<div class="l" style="left:0;width:158px;padding-top:0px"><span>Position X</span></div>
<div class="v" style="left:158px;right:0;">
<span>0</span>
<svg class="ic" style="left:144px;top:3px" width="14" height="14" viewBox="0 0 14 14"><circle cx="7" cy="7" r="7" fill="#9a9a9a"/><path d="M7 1.6 L11 5.9 H3 Z M7 12.4 L11 8.1 H3 Z" fill="#f5f0d5"/></svg>
</div></div>
<div class="r" style="top:493px;height:20px">
<div class="l" style="left:0;width:158px;padding-top:0px"><span>Position Y</span></div>
<div class="v" style="left:158px;right:0;">
<span>1.057953</span>
<svg class="ic" style="left:144px;top:3px" width="14" height="14" viewBox="0 0 14 14"><circle cx="7" cy="7" r="7" fill="#9a9a9a"/><path d="M7 1.6 L11 5.9 H3 Z M7 12.4 L11 8.1 H3 Z" fill="#f5f0d5"/></svg>
</div></div>
<div class="r" style="top:513px;height:20px">
<div class="l" style="left:0;width:158px;padding-top:0px"><span>Position Z</span></div>
<div class="v" style="left:158px;right:0;">
<span>-0.00000002980232</span>
<svg class="ic" style="left:144px;top:3px" width="14" height="14" viewBox="0 0 14 14"><circle cx="7" cy="7" r="7" fill="#9a9a9a"/><path d="M7 1.6 L11 5.9 H3 Z M7 12.4 L11 8.1 H3 Z" fill="#f5f0d5"/></svg>
</div></div>
<div class="r" style="top:533px;height:20px">
<div class="l" style="left:0;width:158px;padding-top:0px"><span>Rotation X</span></div>
<div class="v" style="left:158px;right:0;">
<span>0</span>
<svg class="ic" style="left:144px;top:3px" width="14" height="14" viewBox="0 0 14 14"><circle cx="7" cy="7" r="7" fill="#9a9a9a"/><path d="M7 1.6 L11 5.9 H3 Z M7 12.4 L11 8.1 H3 Z" fill="#f5f0d5"/></svg>
</div></div>
<div class="r" style="top:553px;height:20px">
<div class="l" style="left:0;width:158px;padding-top:0px"><span>Rotation Y</span></div>
<div class="v" style="left:158px;right:0;">
<span>0</span>
<svg class="ic" style="left:144px;top:3px" width="14" height="14" viewBox="0 0 14 14"><circle cx="7" cy="7" r="7" fill="#9a9a9a"/><path d="M7 1.6 L11 5.9 H3 Z M7 12.4 L11 8.1 H3 Z" fill="#f5f0d5"/></svg>
</div></div>
<div class="r" style="top:573px;height:20px">
<div class="l" style="left:0;width:158px;padding-top:0px"><span>Rotation Z</span></div>
<div class="v" style="left:158px;right:0;">
<span>0</span>
<svg class="ic" style="left:144px;top:3px" width="14" height="14" viewBox="0 0 14 14"><circle cx="7" cy="7" r="7" fill="#9a9a9a"/><path d="M7 1.6 L11 5.9 H3 Z M7 12.4 L11 8.1 H3 Z" fill="#f5f0d5"/></svg>
</div></div>
<div class="r" style="top:593px;height:20px">
<div class="l" style="left:0;width:158px;padding-top:0px"><span>Size X</span></div>
<div class="v" style="left:158px;right:0;">
<span>1.166016</span>
<svg class="ic" style="left:144px;top:3px" width="14" height="14" viewBox="0 0 14 14"><circle cx="7" cy="7" r="7" fill="#9a9a9a"/><path d="M7 1.6 L11 5.9 H3 Z M7 12.4 L11 8.1 H3 Z" fill="#f5f0d5"/></svg>
</div></div>
<div class="r" style="top:613px;height:20px">
<div class="l" style="left:0;width:158px;padding-top:0px"><span>Size Y</span></div>
<div class="v" style="left:158px;right:0;">
<span>1.158844</span>
<svg class="ic" style="left:144px;top:3px" width="14" height="14" viewBox="0 0 14 14"><circle cx="7" cy="7" r="7" fill="#9a9a9a"/><path d="M7 1.6 L11 5.9 H3 Z M7 12.4 L11 8.1 H3 Z" fill="#f5f0d5"/></svg>
</div></div>
<div class="r" style="top:633px;height:20px">
<div class="l" style="left:0;width:158px;padding-top:0px"><span>Size Z</span></div>
<div class="v" style="left:158px;right:0;">
<span>0.9824219</span>
<svg class="ic" style="left:144px;top:3px" width="14" height="14" viewBox="0 0 14 14"><circle cx="7" cy="7" r="7" fill="#9a9a9a"/><path d="M7 1.6 L11 5.9 H3 Z M7 12.4 L11 8.1 H3 Z" fill="#f5f0d5"/></svg>
</div></div>
<div class="r" style="top:653px;height:1px"></div>
<div class="sec" style="top:656px"><svg width="12" height="12" viewBox="0 0 12 12"><circle cx="6" cy="6" r="6" fill="#fffbe6"/><path d="M2.9 4.9 L6 8 L9.1 4.9" fill="none" stroke="#c48f00" stroke-width="1.9"/></svg><span>Motion Setting</span></div>
<div class="r d" style="top:687px;height:20px">
<div class="l" style="left:0;width:158px;padding-top:0px"><span>Motion Name</span></div>
<div class="v" style="left:158px;right:0;">

</div></div>
<div class="r" style="top:707px;height:133px">
<div class="l" style="left:0;width:158px;padding-top:56px"><span>Motion</span></div>
<div class="v" style="left:158px;right:0;">
<svg class="ic" style="left:145px;top:117px" width="12" height="12" viewBox="0 0 12 12" fill="none" stroke="#9a9a9a" stroke-width="1.8"><path d="M0.3 6 H11 M6 1 L11 6 L6 11"/></svg>
</div></div>
<div class="r" style="top:840px;height:1px"></div>
<div class="sec" style="top:843px"><svg width="12" height="12" viewBox="0 0 12 12"><circle cx="6" cy="6" r="6" fill="#fffbe6"/><path d="M2.9 4.9 L6 8 L9.1 4.9" fill="none" stroke="#c48f00" stroke-width="1.9"/></svg><span>Materials Used</span></div>
<div class="r d" style="top:874px;height:21px">
<div class="l" style="left:0;width:158px;padding-top:0px"><span>Material Name 1</span></div>
<div class="v" style="left:158px;right:0;">
<span>crystal-blue</span>

</div></div>
<div class="r" style="top:895px;height:133px">
<div class="l" style="left:0;width:158px;padding-top:56px"><span></span></div>
<div class="v" style="left:158px;right:0;">
<svg class="ic" style="left:0;top:2px" width="128" height="128" viewBox="0 0 128 128"><defs><radialGradient id="sg" cx="0.47" cy="0.22" r="0.8"><stop offset="0" stop-color="#49b6f5"/><stop offset="0.35" stop-color="#22a4ea"/><stop offset="1" stop-color="#1588cf"/></radialGradient></defs><rect width="128" height="128" fill="#4b4b4b"/><circle cx="64" cy="63.3" r="36.8" fill="url(#sg)"/></svg>
</div></div>
<div class="r" style="top:1028px;height:1px"></div>
</div>
<div class="a" style="left:1906px;top:113px;width:2px;height:717px;background:#7f7f7f"></div>
<div class="a" style="left:5px;top:1039px;width:1910px;height:36px;background:#696969;color:#f4f4f4;padding-left:3px;line-height:34px;font-size:12.86px;white-space:nowrap"><span id="status">Manage all materials used in the game, including 3D models, textures, sprites, images, and sounds. 3D stamps and 2D stamps are also created here.</span></div>
<div class="a" style="left:1712px;top:1045px;width:92px;height:24px;background:#b4b4b4;border-radius:5px"><div class="a" style="left:5px;top:3px;width:18px;height:18px;background:#5b87e2;border-radius:2px"><svg class="a" style="left:2px;top:3px" width="14" height="12" viewBox="0 0 14 12" fill="none" stroke="#fff" stroke-width="2.2"><path d="M1.5 6.2 L5 9.6 L12.5 1.8"/></svg></div><span class="a" style="left:30px;top:3px;line-height:19px">OK</span></div>
<div class="a" style="left:1808px;top:1045px;width:101px;height:24px;background:#b4b4b4;border-radius:5px"><div class="a" style="left:5px;top:3px;width:18px;height:18px;background:#e05c86;border-radius:2px"><svg class="a" style="left:3px;top:3px" width="12" height="12" viewBox="0 0 12 12" stroke="#fff" stroke-width="2.2"><path d="M1.5 1.5 L10.5 10.5 M10.5 1.5 L1.5 10.5"/></svg></div><span class="a" style="left:30px;top:3px;line-height:19px;letter-spacing:-0.45px">Cancel</span></div>
</body></html>
